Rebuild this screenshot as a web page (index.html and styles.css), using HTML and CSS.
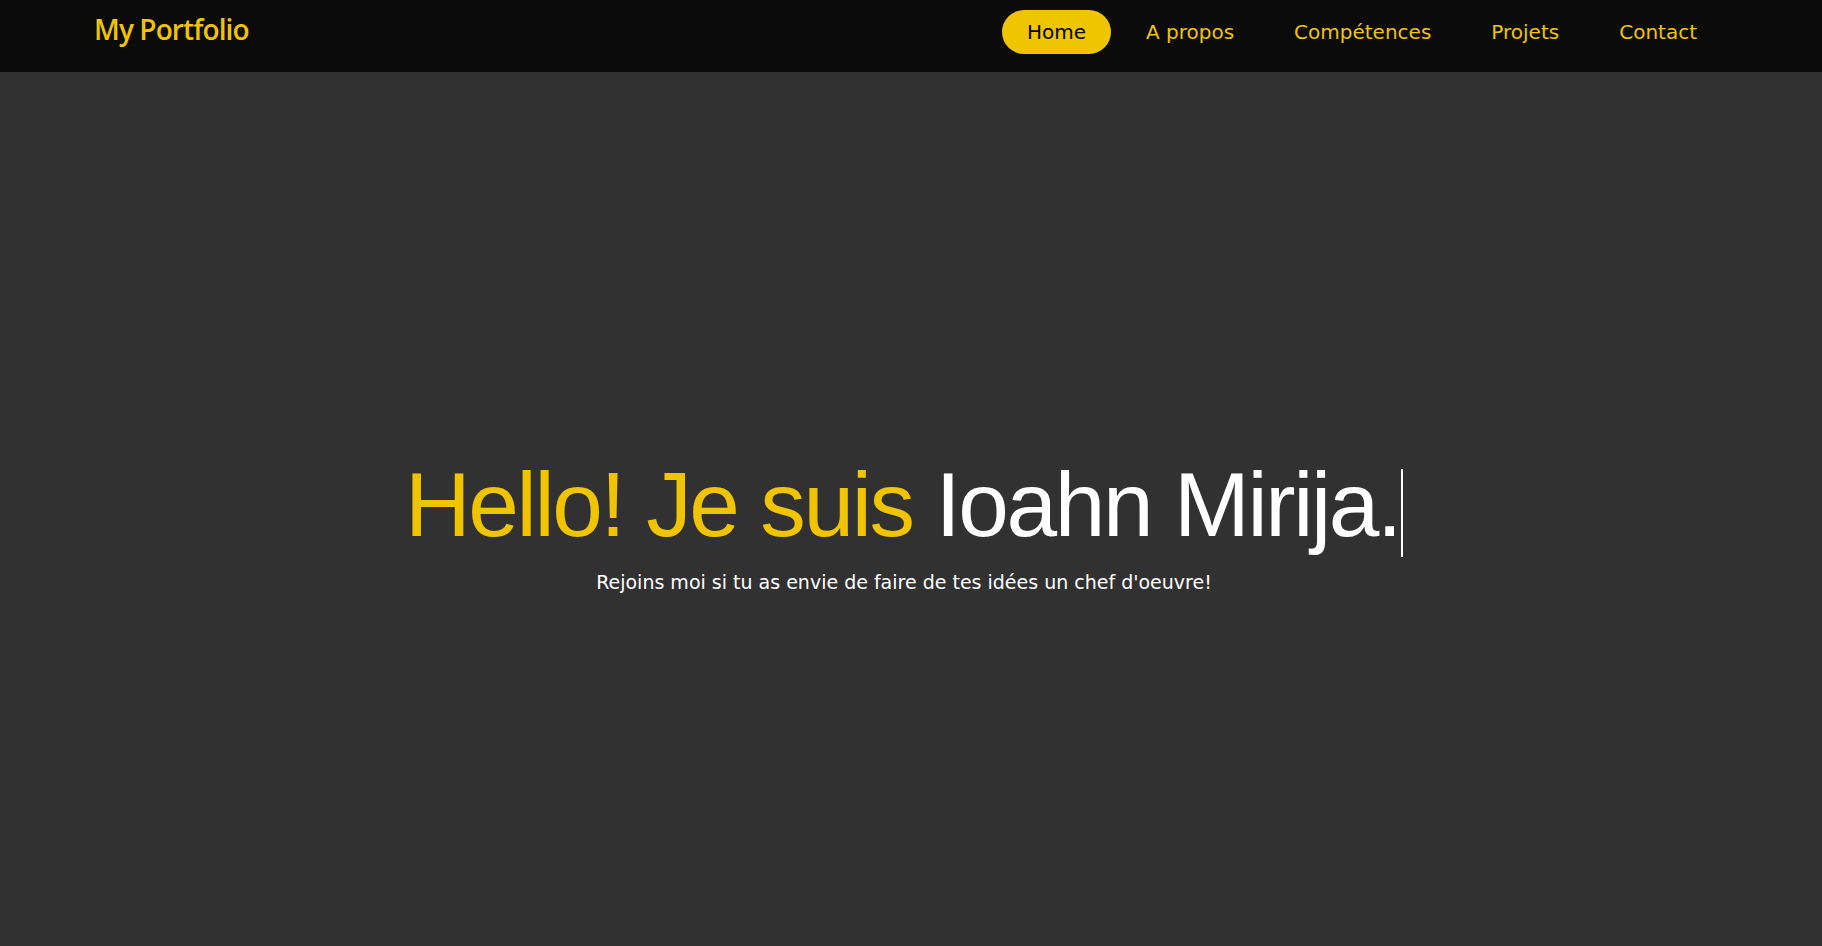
FILE: index.html
```html
<!DOCTYPE html>
<html lang="fr">
<head>
<meta charset="utf-8">
<title>My Portfolio</title>
<link rel="stylesheet" href="styles.css">
</head>
<body>
<header class="navbar">
  <a class="logo" href="#">My Portfolio</a>
  <nav class="nav-links">
    <a class="nav-link active" href="#">Home</a>
    <a class="nav-link" href="#">A propos</a>
    <a class="nav-link" href="#">Compétences</a>
    <a class="nav-link" href="#">Projets</a>
    <a class="nav-link" href="#">Contact</a>
  </nav>
</header>
<main class="hero">
  <h1 class="hero-title"><span class="accent">Hello! Je suis</span> <span class="name">Ioahn Mirija.</span><span class="cursor"></span></h1>
  <p class="hero-sub">Rejoins moi si tu as envie de faire de tes idées un chef d'oeuvre!</p>
</main>
</body>
</html>
```
FILE: styles.css
```css
* { box-sizing: border-box; }
html, body { margin: 0; padding: 0; }
body {
  background: #313131;
  font-family: "DejaVu Sans", "Liberation Sans", sans-serif;
  color: #fff;
  height: 946px;
  overflow: hidden;
  display: flex;
  flex-direction: column;
}
.navbar {
  height: 72px;
  background: #0b0b0b;
  display: flex;
  align-items: center;
  justify-content: space-between;
  padding: 0 100px 0 94px;
  flex-shrink: 0;
}
.logo {
  color: #f0c400;
  font-family: "Open Sans", "DejaVu Sans", sans-serif;
  font-size: 28px;
  font-weight: 600;
  text-decoration: none;
  letter-spacing: -0.9px;
  margin-top: -14px;
}
.nav-links {
  display: flex;
  gap: 10px;
  margin-top: -8px;
}
.nav-link {
  color: #f0c400;
  text-decoration: none;
  font-size: 20px;
  padding: 10px 25px;
  border-radius: 22px;
  line-height: 24px;
}
.nav-link.active {
  background: #f0c400;
  color: #000;
}
.hero {
  flex: 1;
  display: flex;
  flex-direction: column;
  align-items: center;
  justify-content: center;
  padding: 30px 14px 0 0;
}
.hero-title {
  margin: 0;
  font-family: "Liberation Sans", "DejaVu Sans", sans-serif;
  font-weight: 400;
  font-size: 91px;
  line-height: 100px;
  letter-spacing: -2.4px;
  white-space: nowrap;
}
.accent { color: #f0c400; }
.name { color: #fff; }
.cursor {
  display: inline-block;
  width: 2px;
  height: 88px;
  background: #fff;
  margin-left: 1px;
  vertical-align: -21px;
}
.hero-sub {
  margin: 14px 0 0;
  font-size: 19px;
  color: #fff;
}
```
